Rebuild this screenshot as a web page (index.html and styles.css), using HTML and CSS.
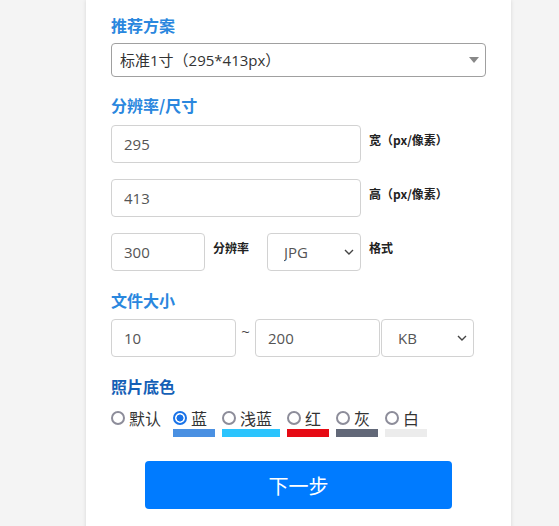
FILE: index.html
```html
<!DOCTYPE html>
<html lang="zh-CN">
<head>
<meta charset="utf-8">
<title>证件照设置</title>
<link rel="stylesheet" href="styles.css">
</head>
<body>
<div class="card">
  <h3 class="heading">推荐方案</h3>
  <select class="plan">
    <option>标准1寸（295*413px）</option>
  </select>

  <h3 class="heading h-size">分辨率/尺寸</h3>
  <div class="row">
    <input class="field w-wide" value="295">
    <span class="lbl">宽（px/像素）</span>
  </div>
  <div class="row">
    <input class="field w-wide" value="413">
    <span class="lbl">高（px/像素）</span>
  </div>
  <div class="row">
    <input class="field w-small" value="300">
    <span class="lbl lbl-res">分辨率</span>
    <select class="field sel w-small"><option>JPG</option></select>
    <span class="lbl">格式</span>
  </div>

  <h3 class="heading h-file">文件大小</h3>
  <div class="row">
    <input class="field w-mid" value="10">
    <span class="tilde">~</span>
    <input class="field w-mid2" value="200">
    <select class="field sel w-unit"><option>KB</option></select>
  </div>

  <h3 class="heading dark h-bg">照片底色</h3>
  <div class="colors">
    <label class="opt first"><span class="radio-line"><span class="dot"></span><span class="txt">默认</span></span><span class="sw"></span></label>
    <label class="opt"><span class="radio-line"><span class="dot on"></span><span class="txt">蓝</span></span><span class="sw blue"></span></label>
    <label class="opt"><span class="radio-line"><span class="dot"></span><span class="txt">浅蓝</span></span><span class="sw light"></span></label>
    <label class="opt"><span class="radio-line"><span class="dot"></span><span class="txt">红</span></span><span class="sw red"></span></label>
    <label class="opt"><span class="radio-line"><span class="dot"></span><span class="txt">灰</span></span><span class="sw gray"></span></label>
    <label class="opt"><span class="radio-line"><span class="dot"></span><span class="txt">白</span></span><span class="sw white"></span></label>
  </div>

  <div class="actions">
    <button class="next">下一步</button>
  </div>
</div>
</body>
</html>
```

FILE: styles.css
```css
html, body {
  margin: 0;
  padding: 0;
  background: #f4f4f4;
  height: 100%;
  overflow: hidden;
}
body {
  font-family: "Open Sans", "Noto Sans CJK SC", sans-serif;
  color: #333;
}
.card {
  box-sizing: border-box;
  width: 425px;
  margin-left: 86px;
  min-height: 560px;
  background: #fff;
  box-shadow: 0 0 4px rgba(0,0,0,0.12);
  padding: 13px 25px 0 25px;
}
.heading {
  margin: 0;
  font-family: "Noto Sans CJK SC", sans-serif;
  font-size: 16px;
  line-height: 24px;
  height: 24px;
  font-weight: 700;
  color: #2a87de;
}
.heading.dark { color: #1560b6; }
.h-size { margin-top: 16px; margin-bottom: 8px; }
.h-file { margin-top: 17px; margin-bottom: 7px; }
.h-bg { margin-top: 17px; }

.plan {
  display: block;
  box-sizing: border-box;
  width: 375px;
  height: 34px;
  margin-top: 6px;
  border: 1px solid #a0a0a0;
  border-radius: 4px;
  padding: 0 8px;
  font-family: "Open Sans", "Noto Sans CJK SC", sans-serif;
  font-size: 15px;
  color: #333;
  background: #fff url("data:image/svg+xml,%3Csvg xmlns='http://www.w3.org/2000/svg' width='10' height='6'%3E%3Cpath d='M0 0h10L5 6z' fill='%23888'/%3E%3C/svg%3E") no-repeat right 6px center;
  -webkit-appearance: none;
  appearance: none;
}

.row {
  display: flex;
  align-items: flex-start;
  margin-bottom: 16px;
}
.field {
  box-sizing: border-box;
  height: 38px;
  border: 1px solid #d2d2d2;
  border-radius: 4px;
  padding: 0 12px;
  font-family: "Open Sans", "Noto Sans CJK SC", sans-serif;
  font-size: 15px;
  color: #555;
  background: #fff;
  outline: none;
  margin: 0;
}
.sel {
  -webkit-appearance: none;
  appearance: none;
  padding-left: 16px;
  background: #fff url("data:image/svg+xml,%3Csvg xmlns='http://www.w3.org/2000/svg' width='10' height='6'%3E%3Cpath d='M1 1l4 4 4-4' fill='none' stroke='%23444' stroke-width='1.4'/%3E%3C/svg%3E") no-repeat right 6px center;
}
.w-wide { width: 250px; }
.w-small { width: 94px; }
.w-mid { width: 125px; }
.w-mid2 { width: 125px; }
.w-unit { width: 93px; margin-left: 1px; }

.lbl {
  margin-left: 8px;
  margin-top: 7px;
  font-family: "Noto Sans CJK SC", sans-serif;
  font-size: 12px;
  line-height: 16px;
  font-weight: 700;
  color: #222;
}
.lbl-res { width: 46px; margin-right: 8px; }
.tilde {
  width: 19px;
  text-align: center;
  margin-top: 2px;
  font-size: 15px;
  line-height: 20px;
  color: #444;
}
.row:last-of-type { margin-bottom: 0; }

.colors {
  display: flex;
  margin-top: 10px;
  gap: 7px;
}
.opt {
  display: flex;
  flex-direction: column;
}
.radio-line {
  display: flex;
  align-items: center;
  height: 20px;
  padding-right: 8px;
}
.opt.first .radio-line { padding-right: 5px; }
.dot {
  box-sizing: border-box;
  width: 14px;
  height: 14px;
  border-radius: 50%;
  border: 2px solid #8d8d9a;
  margin-right: 4px;
  background: #fff;
}
.dot.on {
  border-color: #1a73e8;
  background: radial-gradient(circle, #1a73e8 0 3.2px, #fff 3.8px);
}
.txt {
  font-family: "Noto Sans CJK SC", sans-serif;
  font-size: 16px;
  line-height: 20px;
  color: #333;
}
.sw {
  height: 8px;
  margin-top: 1px;
}
.sw.blue { background: #4a90e2; }
.sw.light { background: #2bc4fd; }
.sw.red { background: #e60a14; }
.sw.gray { background: #626878; }
.sw.white { background: #ececec; }

.actions {
  display: flex;
  padding-left: 34px;
  margin-top: 24px;
}
.next {
  width: 307px;
  height: 48px;
  border: none;
  border-radius: 4px;
  background: #007bff;
  color: #fff;
  font-family: "Noto Sans CJK SC", sans-serif;
  font-size: 20px;
}
```
